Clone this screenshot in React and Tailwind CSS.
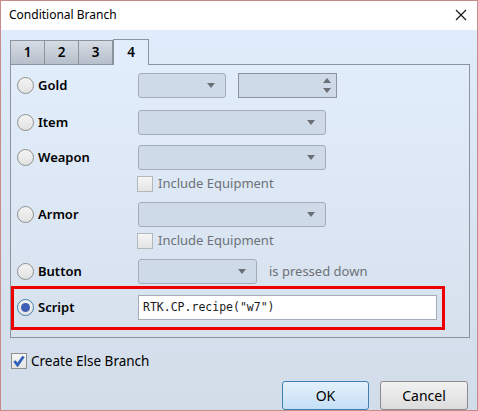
import React from "react";

const ui = { fontFamily: '"Noto Sans", "Open Sans", sans-serif' };
const mono = { fontFamily: '"DejaVu Sans Mono", "Liberation Mono", monospace' };

function Radio({ checked }) {
  return (
    <div
      className={`w-[17px] h-[17px] rounded-full border flex items-center justify-center bg-gradient-to-b from-[#f4f4f4] to-[#e2e2e2] ${
        checked ? "border-[#3c7fb1]" : "border-[#8e8f8f]"
      }`}
    >
      {checked && <div className="w-[9px] h-[9px] rounded-full bg-[#3f5fb5]" />}
    </div>
  );
}

function Arrow() {
  return (
    <svg width="8" height="5" viewBox="0 0 8 5">
      <path d="M0 0 H8 L4 5 Z" fill="#6a6f76" />
    </svg>
  );
}

function Combo({ w }) {
  return (
    <div
      className={`${w} h-[25px] rounded-[3px] border border-[#a3acb7] bg-[#cfdae8] flex items-center justify-end pr-[10px]`}
    >
      <Arrow />
    </div>
  );
}

function Spin() {
  return (
    <div className="w-[99px] h-[25px] border border-[#8a939e] bg-[#cfdae8] flex flex-col items-end justify-center gap-[5px] pr-[5px]">
      <svg width="8" height="5" viewBox="0 0 8 5">
        <path d="M0 5 H8 L4 0 Z" fill="#6a6f76" />
      </svg>
      <Arrow />
    </div>
  );
}

function Check({ checked, disabled }) {
  return (
    <div
      className={`w-[16px] h-[16px] border flex items-center justify-center bg-gradient-to-b from-[#f6f6f6] to-[#e4e4e4] ${
        disabled ? "border-[#b4b8bd]" : "border-[#8e8f8f]"
      }`}
    >
      {checked && (
        <svg width="12" height="12" viewBox="0 0 12 12">
          <path d="M1.5 6 L4.5 10 L10.5 1.5" fill="none" stroke="#2c5fb8" strokeWidth="2.8" />
        </svg>
      )}
    </div>
  );
}

function Row({ label, children, mt }) {
  return (
    <div className={`flex items-center h-[25px] pl-[6px] ${mt}`}>
      <Radio />
      <span className="ml-[4px] w-[100px] text-[13px] font-semibold text-black">{label}</span>
      {children}
    </div>
  );
}

function IncludeRow({ mt }) {
  return (
    <div className={`flex items-center h-[16px] pl-[126px] ${mt}`}>
      <Check disabled />
      <span className="ml-[5px] text-[13px] text-[#6d7177]">Include Equipment</span>
    </div>
  );
}

export default function App() {
  return (
    <div className="w-[478px] h-[411px] border border-[#c98a8a] flex flex-col bg-white" style={ui}>
      {/* title bar */}
      <div className="h-[30px] bg-white flex items-center justify-between pl-[8px] pr-[10px]">
        <span className="text-[12px] text-black">Conditional Branch</span>
        <svg width="12" height="12" viewBox="0 0 12 12">
          <path d="M1 1 L11 11 M11 1 L1 11" stroke="#111" strokeWidth="1.1" />
        </svg>
      </div>

      <div className="flex-1 bg-gradient-to-b from-[#e0ecfb] to-[#d3dce9] pl-[9px] pt-[9px] flex flex-col">
        {/* tabs */}
        <div className="flex items-end h-[25px]">
          {["1", "2", "3"].map((t) => (
            <div
              key={t}
              className="w-[35px] h-[24px] -mr-px border border-b-0 border-[#8b939d] bg-gradient-to-b from-[#d6dce4] to-[#b6bfca] flex items-center justify-center text-[13.5px] font-semibold text-black"
            >
              {t}
            </div>
          ))}
          <div className="relative z-10 w-[36px] h-[26px] -mb-px ml-px border border-b-0 border-[#8b939d] bg-[#e2edfb] flex items-center justify-center text-[13.5px] font-semibold text-black">
            4
          </div>
        </div>

        {/* panel */}
        <div className="w-[460px] h-[274px] border border-[#8b939d] bg-gradient-to-b from-[#e2edfb] to-[#d7e1ee] flex flex-col">
          <Row label="Gold" mt="mt-[8px]">
            <Combo w="w-[88px]" />
            <div className="ml-[12px]">
              <Spin />
            </div>
          </Row>
          <Row label="Item" mt="mt-[12px]">
            <Combo w="w-[188px]" />
          </Row>
          <Row label="Weapon" mt="mt-[10px]">
            <Combo w="w-[188px]" />
          </Row>
          <IncludeRow mt="mt-[6px]" />
          <Row label="Armor" mt="mt-[10px]">
            <Combo w="w-[188px]" />
          </Row>
          <IncludeRow mt="mt-[6px]" />
          <Row label="Button" mt="mt-[10px]">
            <Combo w="w-[119px]" />
            <span className="ml-[12px] text-[13px] text-[#6d7177]">is pressed down</span>
          </Row>

          {/* script row, highlighted */}
          <div className="mt-[2px] w-[434px] h-[44px] border-[3px] border-[#ee0000] flex items-center pl-[3px]">
            <Radio checked />
            <span className="ml-[4px] w-[100px] text-[13px] font-semibold text-black">Script</span>
            <div className="w-[299px] h-[25px] border border-[#a3acb7] bg-white flex items-center pl-[4px] text-[11.5px] text-[#1a1a1a]" style={mono}>
              RTK.CP.recipe("w7")
            </div>
          </div>
        </div>

        <div className="flex items-center mt-[13px] ml-px">
          <Check checked />
          <span className="ml-[4px] text-[13.5px] text-black">Create Else Branch</span>
        </div>

        <div className="flex justify-end gap-[11px] mt-[10px] pr-[9px]">
          <button className="w-[87px] h-[29px] border border-[#3c7fb1] rounded-[3px] bg-gradient-to-b from-[#e5f1fb] to-[#c4dff6] text-[14px] text-black">
            OK
          </button>
          <button className="w-[88px] h-[29px] border border-[#8c8c8c] rounded-[3px] bg-gradient-to-b from-[#f2f2f2] to-[#dcdcdc] text-[14px] text-black">
            Cancel
          </button>
        </div>
      </div>
    </div>
  );
}
